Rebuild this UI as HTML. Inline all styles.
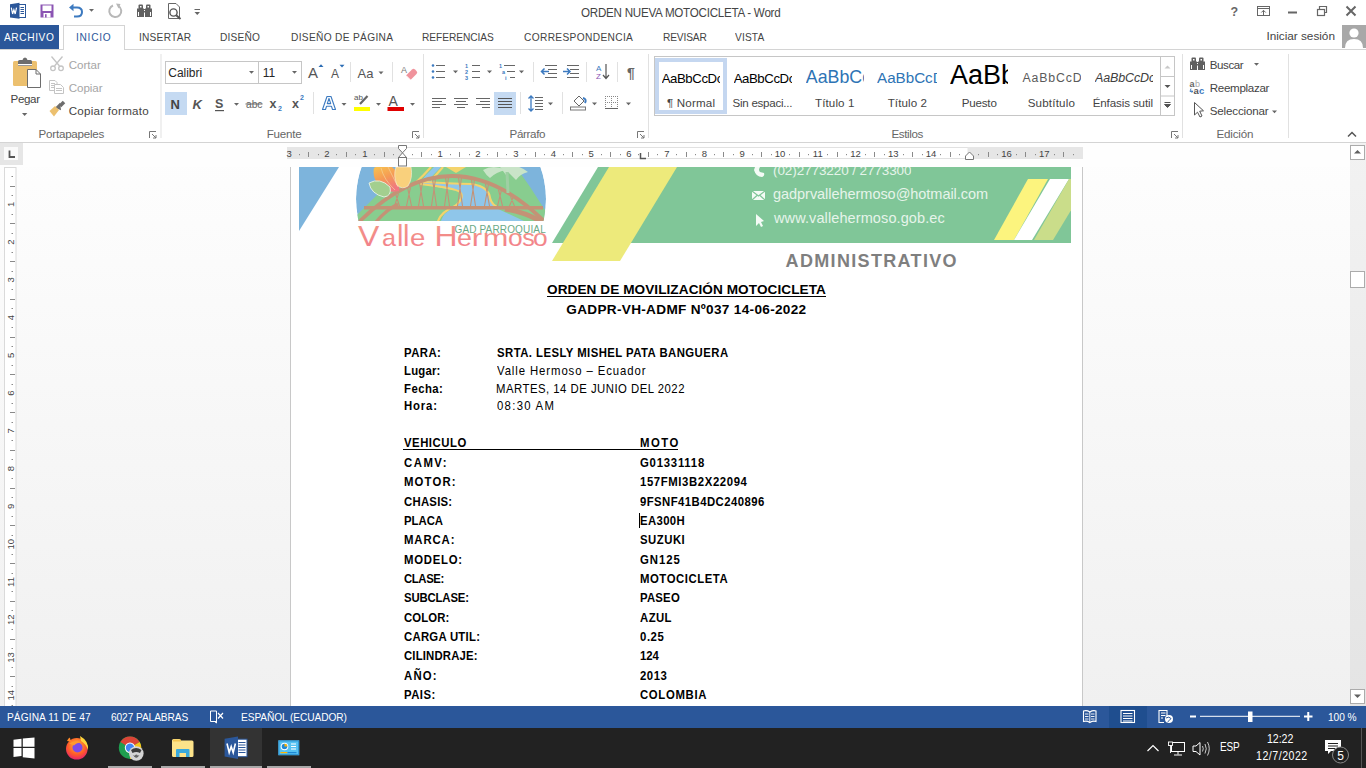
<!DOCTYPE html>
<html><head><meta charset="utf-8">
<style>
*{margin:0;padding:0;box-sizing:border-box}
html,body{width:1366px;height:768px;overflow:hidden;background:#fff;font-family:"Liberation Sans",sans-serif;color:#444}
.a{position:absolute}
.t{white-space:nowrap;line-height:1}
svg{position:absolute;overflow:visible}
</style></head><body>
<!-- doc area -->
<div class="a" style="left:0;top:143px;width:1350px;height:563px;background:linear-gradient(#fefefe,#f0f0f0)"></div>
<div class="a" style="left:290px;top:167px;width:793px;height:539px;background:#fff;border-left:1px solid #c8c8c8;border-right:1px solid #c8c8c8"></div>
<svg style="left:0;top:0" width="1366" height="300">
<defs>
<clipPath id="lc"><path d="M340 167 H560 V221 H340Z"/></clipPath><clipPath id="cc"><circle cx="451" cy="199" r="95"/></clipPath>
<clipPath id="bc"><path d="M552 167 H1071 V243 H552Z"/></clipPath>
<linearGradient id="fl" x1="0" y1="0" x2="0.4" y2="1"><stop offset="0" stop-color="#f8c64e"/><stop offset="0.55" stop-color="#f59a55"/><stop offset="1" stop-color="#f07880"/></linearGradient><linearGradient id="pk" x1="0" y1="0" x2="0" y2="1"><stop offset="0" stop-color="#f39a86"/><stop offset="1" stop-color="#f27d8c"/></linearGradient>
</defs>
<path d="M299 167 H339 L299 231Z" fill="#7db4dc"/>
<g clip-path="url(#lc)"><g clip-path="url(#cc)">
 <circle cx="451" cy="199" r="95" fill="#7db4dc"/>
 <path d="M350 221 L358 214 L377 195 L392 186 L408 167 L516 167 Q530 186 543 207 L552 221Z" fill="#88cd8f"/>
 <path d="M446 167 L466 167 L456 173Z" fill="#f4d36c"/>
 <path d="M434 167 L441 167 Q432 176 428 181 Q455 184 474 185 Q490 188 491 200 Q494 206 498 209 L524 221 L441 221 Q444 212 452 209 L455 206 Q464 196 458 191 Q440 188 420 183 Q426 174 434 167Z" fill="#8fc6ea"/>
 <g stroke="#f4d36c" stroke-width="2.2" fill="none">
  <path d="M431 167 Q424 175 417 181.5 Q450 183.5 472 184 Q489 187 490 198 Q492 206 500 208"/>
  <path d="M443 167 Q436 175 431 180"/>
  <path d="M420 184 Q455 188 460 192 Q465 198 455 206 Q441 212 438 221"/>
 </g>
 <g stroke="#c49276" stroke-width="1.1" fill="none"><path d="M394.5 206 L398.5 193.6 M399.5 206 L395.5 193.6 M406.5 206 L410.5 187.3 M411.5 206 L407.5 187.3 M418.5 206 L422.5 182.6 M423.5 206 L419.5 182.6 M431.5 206 L435.5 179.2 M436.5 206 L432.5 179.2 M444.5 206 L448.5 177.6 M449.5 206 L445.5 177.6 M457.5 206 L461.5 177.8 M462.5 206 L458.5 177.8 M470.5 206 L474.5 179.8 M475.5 206 L471.5 179.8 M484.5 206 L488.5 184.0 M489.5 206 L485.5 184.0 M497.5 206 L501.5 189.8 M502.5 206 L498.5 189.8 M509.5 206 L513.5 196.6 M514.5 206 L510.5 196.6"/></g>
 <path d="M359 222 Q452 130 545 222" stroke="#c49276" stroke-width="3.8" fill="none"/>
 <path d="M376 222 Q386 210 398 204" stroke="#c49276" stroke-width="3.2" fill="none"/>
 <path d="M505 209 Q525 212 542 222" stroke="#c49276" stroke-width="5" fill="none"/>
 <rect x="364" y="206" width="179" height="3.5" fill="#c49276"/>
 <path d="M374 168 Q380 164 392 167 Q401 173 399 191 Q388 194 379 186 Q372 177 374 168Z" fill="url(#fl)"/>
 <path d="M381 168 Q384 180 395 190 M388 167 Q393 177 398 187" stroke="#f3d29a" stroke-width="0.7" fill="none"/>
 <path d="M369 183 Q380 177 390 187 Q392 196 384 197 Q371 194 369 183Z" fill="#a3cf8f" stroke="#f2f8ee" stroke-width="0.8"/>
 <path d="M396 167 L411 167 Q413 178 408 186 Q402 190 397 185 Q393 176 396 167Z" fill="#f9d07c" stroke="#fbf1dc" stroke-width="0.6"/>
 <g fill="#c9e4c8"><path d="M483 170 Q493 164 506 170 Q496 172 490 178 Q486 175 483 170Z"/><path d="M504 168 Q515 162 528 172 Q520 174 516 180 Q510 174 504 168Z"/><path d="M500 167 L512 167 Q508 172 506 175Z"/></g>
 <path d="M507 172 L508 193" stroke="#9fcfa3" stroke-width="3"/>
</g></g>
<g fill="url(#pk)" font-family="Liberation Sans"><text transform="translate(358.0,245.5) scale(1.1,1)" font-size="29">V</text><text transform="translate(382.0,245.5) scale(1.05,1)" font-size="24">a</text><text transform="translate(397.0,245.5) scale(1.0,1)" font-size="29">l</text><text transform="translate(403.0,245.5) scale(1.0,1)" font-size="29">l</text><text transform="translate(409.9,245.5) scale(1.15,1)" font-size="24">e</text><text transform="translate(434.4,245.5) scale(1.1,1)" font-size="29">H</text><text transform="translate(456.9,245.5) scale(1.12,1)" font-size="24">e</text><text transform="translate(471.8,245.5) scale(1.3,1)" font-size="24">r</text><text transform="translate(482.8,245.5) scale(1.28,1)" font-size="24">m</text><text transform="translate(507.9,245.5) scale(1.1,1)" font-size="24">o</text><text transform="translate(522.2,245.5) scale(1.05,1)" font-size="24">s</text><text transform="translate(532.9,245.5) scale(1.1,1)" font-size="24">o</text></g>
<text x="454.5" y="232.6" font-family="Liberation Sans" font-size="10" textLength="91.2" lengthAdjust="spacing" fill="#6aa985">GAD PARROQUIAL</text>
<path d="M598 167 H1071 V243 H552Z" fill="#80c698"/>
<path d="M609 167 H677 L620 261 H552Z" fill="#edea7b"/>
<path d="M1028 179 H1048 L1014 240 H994Z" fill="#fcf47e"/>
<path d="M1050 179 H1069 L1032 240 H1014Z" fill="#ffffff"/>
<g clip-path="url(#bc)"><path d="M1069 179 H1090 L1053 240 H1034Z" fill="#cadd8a"/></g>
<g fill="#f4fbf6">
 <path d="M755 167 L760 167 Q758 170 760 172 L764 173 Q765 176 762 177 Q756 177 754 170Z"/>
 <path d="M752 191 H765 V200 H752Z"/>
 <path d="M756 214 L756 226 L759 223 L761 227 L763 226 L761 222 L764 221Z"/>
</g>
<path d="M752 191 L758.5 196 L765 191 M752 200 L757 195.5 M765 200 L760 195.5" stroke="#80c698" stroke-width="1.2" fill="none"/>
</svg>

<div class="a" style="left:403px;top:448.6px;width:275px;height:1px;background:#000"></div>
<div class="a" style="left:547px;top:296px;width:279px;height:1px;background:#000"></div>
<div class="a" style="left:639px;top:513px;width:1px;height:15px;background:#000"></div>
<!-- vertical scrollbar -->
<div class="a" style="left:1350px;top:143px;width:16px;height:563px;background:linear-gradient(#f2f2f2,#e4e4e4)"></div>
<div class="a" style="left:1350px;top:145px;width:15px;height:15px;background:#fff;border:1px solid #ababab"></div>
<svg style="left:1350px;top:145px" width="15" height="15"><path d="M4 8.5 L7.5 5 L11 8.5Z" fill="#606060"/></svg>
<div class="a" style="left:1350px;top:271px;width:15px;height:17px;background:#fff;border:1px solid #ababab"></div>
<div class="a" style="left:1350px;top:689px;width:15px;height:15px;background:#fff;border:1px solid #ababab"></div>
<svg style="left:1350px;top:689px" width="15" height="15"><path d="M4 5.5 L7.5 9 L11 5.5Z" fill="#606060"/></svg>
<!-- ruler row -->
<div class="a" style="left:0;top:143px;width:1350px;height:24px;background:#fefefe"></div>
<svg style="left:0;top:0" width="1366" height="706">
<rect x="287.5" y="147.5" width="795" height="11" fill="#fff" stroke="#e1e1e1"/>
<rect x="287" y="147" width="115.5" height="12" fill="#e6e6e6"/>
<rect x="967.5" y="147" width="115.5" height="12" fill="#e6e6e6"/>
<rect x="299" y="154" width="1" height="1.2" fill="#8a8a8a"/>
<rect x="308" y="152" width="1" height="5" fill="#8a8a8a"/>
<rect x="318" y="154" width="1" height="1.2" fill="#8a8a8a"/>
<rect x="336" y="154" width="1" height="1.2" fill="#8a8a8a"/>
<rect x="346" y="152" width="1" height="5" fill="#8a8a8a"/>
<rect x="355" y="154" width="1" height="1.2" fill="#8a8a8a"/>
<rect x="374" y="154" width="1" height="1.2" fill="#8a8a8a"/>
<rect x="384" y="152" width="1" height="5" fill="#8a8a8a"/>
<rect x="393" y="154" width="1" height="1.2" fill="#8a8a8a"/>
<rect x="412" y="154" width="1" height="1.2" fill="#8a8a8a"/>
<rect x="421" y="152" width="1" height="5" fill="#8a8a8a"/>
<rect x="431" y="154" width="1" height="1.2" fill="#8a8a8a"/>
<rect x="450" y="154" width="1" height="1.2" fill="#8a8a8a"/>
<rect x="459" y="152" width="1" height="5" fill="#8a8a8a"/>
<rect x="469" y="154" width="1" height="1.2" fill="#8a8a8a"/>
<rect x="487" y="154" width="1" height="1.2" fill="#8a8a8a"/>
<rect x="497" y="152" width="1" height="5" fill="#8a8a8a"/>
<rect x="506" y="154" width="1" height="1.2" fill="#8a8a8a"/>
<rect x="525" y="154" width="1" height="1.2" fill="#8a8a8a"/>
<rect x="535" y="152" width="1" height="5" fill="#8a8a8a"/>
<rect x="544" y="154" width="1" height="1.2" fill="#8a8a8a"/>
<rect x="563" y="154" width="1" height="1.2" fill="#8a8a8a"/>
<rect x="572" y="152" width="1" height="5" fill="#8a8a8a"/>
<rect x="582" y="154" width="1" height="1.2" fill="#8a8a8a"/>
<rect x="601" y="154" width="1" height="1.2" fill="#8a8a8a"/>
<rect x="610" y="152" width="1" height="5" fill="#8a8a8a"/>
<rect x="620" y="154" width="1" height="1.2" fill="#8a8a8a"/>
<rect x="638" y="154" width="1" height="1.2" fill="#8a8a8a"/>
<rect x="648" y="152" width="1" height="5" fill="#8a8a8a"/>
<rect x="657" y="154" width="1" height="1.2" fill="#8a8a8a"/>
<rect x="676" y="154" width="1" height="1.2" fill="#8a8a8a"/>
<rect x="686" y="152" width="1" height="5" fill="#8a8a8a"/>
<rect x="695" y="154" width="1" height="1.2" fill="#8a8a8a"/>
<rect x="714" y="154" width="1" height="1.2" fill="#8a8a8a"/>
<rect x="723" y="152" width="1" height="5" fill="#8a8a8a"/>
<rect x="733" y="154" width="1" height="1.2" fill="#8a8a8a"/>
<rect x="752" y="154" width="1" height="1.2" fill="#8a8a8a"/>
<rect x="761" y="152" width="1" height="5" fill="#8a8a8a"/>
<rect x="771" y="154" width="1" height="1.2" fill="#8a8a8a"/>
<rect x="789" y="154" width="1" height="1.2" fill="#8a8a8a"/>
<rect x="799" y="152" width="1" height="5" fill="#8a8a8a"/>
<rect x="808" y="154" width="1" height="1.2" fill="#8a8a8a"/>
<rect x="827" y="154" width="1" height="1.2" fill="#8a8a8a"/>
<rect x="837" y="152" width="1" height="5" fill="#8a8a8a"/>
<rect x="846" y="154" width="1" height="1.2" fill="#8a8a8a"/>
<rect x="865" y="154" width="1" height="1.2" fill="#8a8a8a"/>
<rect x="874" y="152" width="1" height="5" fill="#8a8a8a"/>
<rect x="884" y="154" width="1" height="1.2" fill="#8a8a8a"/>
<rect x="903" y="154" width="1" height="1.2" fill="#8a8a8a"/>
<rect x="912" y="152" width="1" height="5" fill="#8a8a8a"/>
<rect x="922" y="154" width="1" height="1.2" fill="#8a8a8a"/>
<rect x="940" y="154" width="1" height="1.2" fill="#8a8a8a"/>
<rect x="950" y="152" width="1" height="5" fill="#8a8a8a"/>
<rect x="959" y="154" width="1" height="1.2" fill="#8a8a8a"/>
<rect x="978" y="154" width="1" height="1.2" fill="#8a8a8a"/>
<rect x="988" y="152" width="1" height="5" fill="#8a8a8a"/>
<rect x="997" y="154" width="1" height="1.2" fill="#8a8a8a"/>
<rect x="1016" y="154" width="1" height="1.2" fill="#8a8a8a"/>
<rect x="1025" y="152" width="1" height="5" fill="#8a8a8a"/>
<rect x="1035" y="154" width="1" height="1.2" fill="#8a8a8a"/>
<rect x="1054" y="154" width="1" height="1.2" fill="#8a8a8a"/>
<rect x="1063" y="152" width="1" height="5" fill="#8a8a8a"/>
<rect x="1073" y="154" width="1" height="1.2" fill="#8a8a8a"/>
<text x="289.2" y="157" font-family="Liberation Sans" font-size="9.5" fill="#444" text-anchor="middle">3</text>
<text x="327.0" y="157" font-family="Liberation Sans" font-size="9.5" fill="#444" text-anchor="middle">2</text>
<text x="364.8" y="157" font-family="Liberation Sans" font-size="9.5" fill="#444" text-anchor="middle">1</text>
<text x="440.2" y="157" font-family="Liberation Sans" font-size="9.5" fill="#444" text-anchor="middle">1</text>
<text x="478.0" y="157" font-family="Liberation Sans" font-size="9.5" fill="#444" text-anchor="middle">2</text>
<text x="515.8" y="157" font-family="Liberation Sans" font-size="9.5" fill="#444" text-anchor="middle">3</text>
<text x="553.5" y="157" font-family="Liberation Sans" font-size="9.5" fill="#444" text-anchor="middle">4</text>
<text x="591.2" y="157" font-family="Liberation Sans" font-size="9.5" fill="#444" text-anchor="middle">5</text>
<text x="629.0" y="157" font-family="Liberation Sans" font-size="9.5" fill="#444" text-anchor="middle">6</text>
<text x="666.8" y="157" font-family="Liberation Sans" font-size="9.5" fill="#444" text-anchor="middle">7</text>
<text x="704.5" y="157" font-family="Liberation Sans" font-size="9.5" fill="#444" text-anchor="middle">8</text>
<text x="742.2" y="157" font-family="Liberation Sans" font-size="9.5" fill="#444" text-anchor="middle">9</text>
<text x="780.0" y="157" font-family="Liberation Sans" font-size="9.5" fill="#444" text-anchor="middle">10</text>
<text x="817.8" y="157" font-family="Liberation Sans" font-size="9.5" fill="#444" text-anchor="middle">11</text>
<text x="855.5" y="157" font-family="Liberation Sans" font-size="9.5" fill="#444" text-anchor="middle">12</text>
<text x="893.2" y="157" font-family="Liberation Sans" font-size="9.5" fill="#444" text-anchor="middle">13</text>
<text x="931.0" y="157" font-family="Liberation Sans" font-size="9.5" fill="#444" text-anchor="middle">14</text>
<text x="1006.5" y="157" font-family="Liberation Sans" font-size="9.5" fill="#444" text-anchor="middle">16</text>
<text x="1044.2" y="157" font-family="Liberation Sans" font-size="9.5" fill="#444" text-anchor="middle">17</text>
<path d="M398.5 145.5 H406.5 V148.5 L402.5 152.8 L398.5 148.5Z M402.5 152.8 L406.5 157.5 H398.5Z" fill="#fff" stroke="#777"/>
<rect x="398.5" y="157.5" width="8" height="8.5" fill="#fff" stroke="#777"/>
<path d="M965.5 159.5 V156 L969.5 152 L973.5 156 V159.5Z" fill="#fff" stroke="#777"/>
<path d="M640.5 153 V158.5 H646" stroke="#555" stroke-width="1.5" fill="none"/>
<rect x="0" y="143" width="23" height="22" fill="#e6e6e6"/>
<rect x="4" y="147" width="14" height="13" fill="#fafafa"/>
<path d="M9.5 150.5 V157 H15" stroke="#555" stroke-width="1.8" fill="none"/>
<rect x="4.5" y="167.5" width="11.5" height="540" fill="#fff" stroke="#dadada"/>
<rect x="11.5" y="176" width="1.5" height="1" fill="#8a8a8a"/>
<rect x="10" y="186" width="5" height="1" fill="#8a8a8a"/>
<rect x="11.5" y="195" width="1.5" height="1" fill="#8a8a8a"/>
<rect x="11.5" y="214" width="1.5" height="1" fill="#8a8a8a"/>
<rect x="10" y="223" width="5" height="1" fill="#8a8a8a"/>
<rect x="11.5" y="233" width="1.5" height="1" fill="#8a8a8a"/>
<rect x="11.5" y="252" width="1.5" height="1" fill="#8a8a8a"/>
<rect x="10" y="261" width="5" height="1" fill="#8a8a8a"/>
<rect x="11.5" y="271" width="1.5" height="1" fill="#8a8a8a"/>
<rect x="11.5" y="289" width="1.5" height="1" fill="#8a8a8a"/>
<rect x="10" y="299" width="5" height="1" fill="#8a8a8a"/>
<rect x="11.5" y="308" width="1.5" height="1" fill="#8a8a8a"/>
<rect x="11.5" y="327" width="1.5" height="1" fill="#8a8a8a"/>
<rect x="10" y="337" width="5" height="1" fill="#8a8a8a"/>
<rect x="11.5" y="346" width="1.5" height="1" fill="#8a8a8a"/>
<rect x="11.5" y="365" width="1.5" height="1" fill="#8a8a8a"/>
<rect x="10" y="374" width="5" height="1" fill="#8a8a8a"/>
<rect x="11.5" y="384" width="1.5" height="1" fill="#8a8a8a"/>
<rect x="11.5" y="403" width="1.5" height="1" fill="#8a8a8a"/>
<rect x="10" y="412" width="5" height="1" fill="#8a8a8a"/>
<rect x="11.5" y="422" width="1.5" height="1" fill="#8a8a8a"/>
<rect x="11.5" y="440" width="1.5" height="1" fill="#8a8a8a"/>
<rect x="10" y="450" width="5" height="1" fill="#8a8a8a"/>
<rect x="11.5" y="459" width="1.5" height="1" fill="#8a8a8a"/>
<rect x="11.5" y="478" width="1.5" height="1" fill="#8a8a8a"/>
<rect x="10" y="488" width="5" height="1" fill="#8a8a8a"/>
<rect x="11.5" y="497" width="1.5" height="1" fill="#8a8a8a"/>
<rect x="11.5" y="516" width="1.5" height="1" fill="#8a8a8a"/>
<rect x="10" y="525" width="5" height="1" fill="#8a8a8a"/>
<rect x="11.5" y="535" width="1.5" height="1" fill="#8a8a8a"/>
<rect x="11.5" y="554" width="1.5" height="1" fill="#8a8a8a"/>
<rect x="10" y="563" width="5" height="1" fill="#8a8a8a"/>
<rect x="11.5" y="573" width="1.5" height="1" fill="#8a8a8a"/>
<rect x="11.5" y="591" width="1.5" height="1" fill="#8a8a8a"/>
<rect x="10" y="601" width="5" height="1" fill="#8a8a8a"/>
<rect x="11.5" y="610" width="1.5" height="1" fill="#8a8a8a"/>
<rect x="11.5" y="629" width="1.5" height="1" fill="#8a8a8a"/>
<rect x="10" y="639" width="5" height="1" fill="#8a8a8a"/>
<rect x="11.5" y="648" width="1.5" height="1" fill="#8a8a8a"/>
<rect x="11.5" y="667" width="1.5" height="1" fill="#8a8a8a"/>
<rect x="10" y="676" width="5" height="1" fill="#8a8a8a"/>
<rect x="11.5" y="686" width="1.5" height="1" fill="#8a8a8a"/>
<rect x="11.5" y="705" width="1.5" height="1" fill="#8a8a8a"/>
<text x="0" y="0" font-family="Liberation Sans" font-size="9.5" fill="#444" text-anchor="middle" transform="translate(14,204.4) rotate(-90)">1</text>
<text x="0" y="0" font-family="Liberation Sans" font-size="9.5" fill="#444" text-anchor="middle" transform="translate(14,242.2) rotate(-90)">2</text>
<text x="0" y="0" font-family="Liberation Sans" font-size="9.5" fill="#444" text-anchor="middle" transform="translate(14,279.9) rotate(-90)">3</text>
<text x="0" y="0" font-family="Liberation Sans" font-size="9.5" fill="#444" text-anchor="middle" transform="translate(14,317.7) rotate(-90)">4</text>
<text x="0" y="0" font-family="Liberation Sans" font-size="9.5" fill="#444" text-anchor="middle" transform="translate(14,355.4) rotate(-90)">5</text>
<text x="0" y="0" font-family="Liberation Sans" font-size="9.5" fill="#444" text-anchor="middle" transform="translate(14,393.2) rotate(-90)">6</text>
<text x="0" y="0" font-family="Liberation Sans" font-size="9.5" fill="#444" text-anchor="middle" transform="translate(14,430.9) rotate(-90)">7</text>
<text x="0" y="0" font-family="Liberation Sans" font-size="9.5" fill="#444" text-anchor="middle" transform="translate(14,468.7) rotate(-90)">8</text>
<text x="0" y="0" font-family="Liberation Sans" font-size="9.5" fill="#444" text-anchor="middle" transform="translate(14,506.4) rotate(-90)">9</text>
<text x="0" y="0" font-family="Liberation Sans" font-size="9.5" fill="#444" text-anchor="middle" transform="translate(14,544.2) rotate(-90)">10</text>
<text x="0" y="0" font-family="Liberation Sans" font-size="9.5" fill="#444" text-anchor="middle" transform="translate(14,582.0) rotate(-90)">11</text>
<text x="0" y="0" font-family="Liberation Sans" font-size="9.5" fill="#444" text-anchor="middle" transform="translate(14,619.7) rotate(-90)">12</text>
<text x="0" y="0" font-family="Liberation Sans" font-size="9.5" fill="#444" text-anchor="middle" transform="translate(14,657.5) rotate(-90)">13</text>
<text x="0" y="0" font-family="Liberation Sans" font-size="9.5" fill="#444" text-anchor="middle" transform="translate(14,695.2) rotate(-90)">14</text>
</svg>
<!-- title + tabs + ribbon -->
<div class="a" style="left:0;top:0;width:1366px;height:49px;background:#fff"></div>
<div class="a" style="left:0;top:25px;width:59px;height:25px;background:#2b579a"></div>
<div class="a" style="left:63px;top:25px;width:62px;height:25px;background:#fff;border:1px solid #d4d4d4;border-bottom:none"></div>
<div class="a" style="left:0;top:49px;width:1366px;height:94px;background:#fff;border-top:1px solid #d4d4d4;border-bottom:1px solid #d4d4d4"></div>
<div class="a" style="left:64px;top:48px;width:60px;height:2px;background:#fff"></div>
<div class="a" style="left:1342px;top:25px;width:24px;height:23px;background:#a8a8a8"></div>
<svg style="left:0;top:0" width="1366" height="143" shape-rendering="geometricPrecision">
<!-- QAT -->
<path d="M10 4.2 L19.5 2.8 V18.8 L10 17.4Z" fill="#2b579a"/>
<rect x="19" y="4.5" width="6.5" height="13" fill="#fff" stroke="#2b579a" stroke-width="1"/>
<path d="M20.5 7.5H24 M20.5 9.5H24 M20.5 11.5H24 M20.5 13.5H24" stroke="#2b579a" stroke-width="1"/>
<path d="M11.3 7.6 L12.6 14 L13.9 9.8 L15.2 14 L16.5 7.6" stroke="#fff" stroke-width="1.2" fill="none"/>
<path d="M40.5 4.5 H53.5 V17.5 H40.5Z" fill="#8b54b3"/>
<rect x="42.5" y="5.5" width="9" height="5.5" fill="#fff"/>
<rect x="43.5" y="13" width="7" height="4.5" fill="#fff"/>
<rect x="45" y="14.2" width="1.6" height="3.3" fill="#8b54b3"/>
<path d="M71 7.5 H77 Q82 7.5 82 12 Q82 16.5 77 16.5 H74" stroke="#3c7ac0" stroke-width="2" fill="none"/>
<path d="M69 7.5 L73.5 3.8 V11.2Z" fill="#3c7ac0"/>
<path d="M89 9 H94 L91.5 11.7Z" fill="#666"/>
<path d="M113 5.5 A6 6 0 1 0 118.5 6" stroke="#b8b8b8" stroke-width="2" fill="none"/>
<path d="M116 3.5 L120.5 4 L118.5 8.5Z" fill="#b8b8b8"/>
<g transform="translate(137,4.5)"><g fill="#606060"><rect x="1.5" y="0" width="4.5" height="5" rx="1"/><rect x="9" y="0" width="4.5" height="5" rx="1"/><rect x="0" y="4" width="7" height="8.5"/><rect x="8" y="4" width="7" height="8.5"/><rect x="6" y="4.5" width="3" height="3.5"/></g>
<g fill="#fff"><rect x="3" y="1.5" width="1.5" height="1.5"/><rect x="10.5" y="1.5" width="1.5" height="1.5"/><rect x="1" y="7.5" width="1" height="4"/><rect x="13" y="7.5" width="1" height="4"/><rect x="7" y="5.5" width="1" height="1"/></g></g>
<path d="M168.5 3.5 H176 L179.5 7 V18.5 H168.5Z" fill="none" stroke="#666" stroke-width="1"/>
<circle cx="173.5" cy="12.5" r="3.6" fill="#fff" stroke="#555" stroke-width="1.4"/>
<path d="M176.2 15.2 L180.5 19" stroke="#555" stroke-width="2"/>
<rect x="194.5" y="9" width="5.5" height="1" fill="#666"/>
<path d="M194.5 12 H200 L197.25 15Z" fill="#666"/>
<!-- window controls -->
<text x="1230.5" y="16" font-family="Liberation Sans" font-weight="bold" font-size="12.5" fill="#666">?</text>
<rect x="1257.5" y="6.5" width="12" height="9" fill="none" stroke="#666" stroke-width="1"/>
<path d="M1257.5 8.5 H1269.5" stroke="#666"/><path d="M1263.5 15 V10.5 M1261.3 12.5 L1263.5 10.3 L1265.7 12.5" stroke="#666" fill="none"/>
<rect x="1288" y="11.5" width="9" height="2" fill="#666"/>
<rect x="1317.5" y="9.5" width="7" height="6" fill="none" stroke="#666" stroke-width="1.2"/>
<path d="M1319.5 9 V6.5 H1326.5 V12.5 H1325" stroke="#666" fill="none" stroke-width="1.2"/>
<path d="M1346.5 6.5 L1355.5 15.5 M1355.5 6.5 L1346.5 15.5" stroke="#666" stroke-width="2"/>
<!-- avatar -->
<circle cx="1354" cy="33" r="4.6" fill="#fff"/>
<path d="M1345 48 Q1345 39 1354 39 Q1363 39 1363 48Z" fill="#fff"/>
<!-- separators -->
<g fill="#e1e1e1"><rect x="160.5" y="54" width="1" height="84"/><rect x="423" y="54" width="1" height="84"/><rect x="648" y="54" width="1" height="84"/><rect x="1182" y="54" width="1" height="84"/><rect x="1288" y="54" width="1" height="84"/></g>
<!-- launchers -->
<g stroke="#777" fill="none" stroke-width="1">
 <path d="M149.5 138 V131.5 H156"/><path d="M152 134 L156 138 M156 135 V138 H153"/>
 <path d="M412.5 138 V131.5 H419"/><path d="M415 134 L419 138 M419 135 V138 H416"/>
 <path d="M637.5 138 V131.5 H644"/><path d="M640 134 L644 138 M644 135 V138 H641"/>
 <path d="M1171.5 138 V131.5 H1178"/><path d="M1174 134 L1178 138 M1178 135 V138 H1175"/>
</g>
<path d="M1348 136.5 L1352 132.5 L1356 136.5" stroke="#555" stroke-width="1.5" fill="none"/>
<!-- Portapapeles -->
<rect x="13" y="61" width="24" height="25" rx="1.5" fill="#ecc06f"/>
<path d="M18 66 V61.5 Q18 60 19.5 60 H22.5 Q23 57.5 25 57.5 Q27 57.5 27.5 60 H30.5 Q32 60 32 61.5 V66Z" fill="#6d6d6d"/>
<rect x="18" y="64" width="14" height="1.3" fill="#fff"/>
<path d="M27.5 69.5 H36 L40.5 74 V87.5 H27.5Z" fill="#fff" stroke="#6d6d6d" stroke-width="1"/>
<path d="M36 69.5 V74 H40.5" fill="none" stroke="#6d6d6d" stroke-width="1"/>
<path d="M22 113 H27.3 L24.65 116Z" fill="#666"/>
<g stroke="#c4c4c4" fill="none" stroke-width="1.3">
 <path d="M51.5 56.5 L59.5 66 M62.5 56.5 L54.5 66"/>
 <circle cx="53" cy="68.3" r="2.3"/><circle cx="61" cy="68.3" r="2.3"/>
</g>
<g stroke="#c4c4c4" fill="#fff" stroke-width="1">
 <path d="M49.5 80.5 H55 L57 82.5 V90.5 H49.5Z"/>
 <path d="M54.5 84.5 H60.5 L63.5 87.5 V93.5 H54.5Z"/>
 <path d="M51 83.5H55 M51 85.5H54 M51 87.5H54 M56 88.5H62 M56 90.5H62"/>
</g>
<path d="M56 104 L63 104 L58.5 110 Z" fill="#6d6d6d" transform="rotate(-45 60 107)"/>
<path d="M60 106 L64 102" stroke="#6d6d6d" stroke-width="3.5"/>
<path d="M49.5 111 L55 106 L59 110 L54 116.5Z" fill="#ecc06f"/>
<!-- Fuente -->
<rect x="165.5" y="61.5" width="136" height="22" fill="#fff" stroke="#c6c6c6"/>
<path d="M258.5 61.5 V83.5" stroke="#c6c6c6"/>
<g fill="#666"><path d="M249 71 H254 L251.5 73.8Z"/><path d="M292 71 H297 L294.5 73.8Z"/>
<path d="M378.5 71.5 H383.5 L381 74.3Z"/><path d="M234 103 H239 L236.5 105.8Z"/><path d="M341.5 103 H346.5 L344 105.8Z"/><path d="M376 103 H381 L378.5 105.8Z"/><path d="M410 103 H415 L412.5 105.8Z"/></g>
<text x="308" y="78" font-family="Liberation Sans" font-size="15" fill="#555">A</text>
<path d="M318.5 67 L321 64.2 L323.5 67Z" fill="#2b6cb4"/>
<text x="331" y="78" font-family="Liberation Sans" font-size="12" fill="#555">A</text>
<path d="M339.5 64.8 L344.5 64.8 L342 67.6Z" fill="#2b6cb4"/>
<rect x="350" y="62" width="1" height="20" fill="#e1e1e1"/>
<rect x="392" y="62" width="1" height="20" fill="#e1e1e1"/>
<text x="357.5" y="77.5" font-family="Liberation Sans" font-size="13" fill="#555">Aa</text>
<text x="401" y="73" font-family="Liberation Sans" font-size="9" fill="#777">A</text>
<path d="M406 75.5 L412 69.5 Q413.5 68 415 69.5 L416.5 71 Q418 72.5 416.5 74 L410.5 80 Z" fill="#f0939c"/>
<path d="M406 75.5 L410.5 80" stroke="#fff" stroke-width="1"/>
<rect x="165" y="92" width="22" height="23" fill="#c5daf2"/>
<text x="170.5" y="108.5" font-family="Liberation Sans" font-weight="bold" font-size="13" fill="#444">N</text>
<text x="192.5" y="108.5" font-family="Liberation Sans" font-weight="bold" font-style="italic" font-size="13" fill="#555">K</text>
<text x="215" y="108" font-family="Liberation Sans" font-weight="bold" font-size="12.5" fill="#555">S</text>
<rect x="215" y="110" width="9" height="1.2" fill="#555"/>
<text x="246" y="108" font-family="Liberation Sans" font-size="11" fill="#666" textLength="16.5" lengthAdjust="spacingAndGlyphs">abc</text>
<rect x="245.5" y="103.5" width="17" height="1" fill="#666"/>
<text x="269.5" y="108" font-family="Liberation Sans" font-weight="bold" font-size="12.5" fill="#555">x</text>
<text x="278" y="111" font-family="Liberation Sans" font-weight="bold" font-size="7" fill="#3c7ac0">2</text>
<text x="292" y="108" font-family="Liberation Sans" font-weight="bold" font-size="12.5" fill="#555">x</text>
<text x="300" y="100" font-family="Liberation Sans" font-weight="bold" font-size="7" fill="#3c7ac0">2</text>
<rect x="313" y="92" width="1" height="22" fill="#e1e1e1"/>
<path d="M322.5 109.5 L327 96.5 H331 L335.5 109.5 H332.5 L331.5 106.3 H326.5 L325.5 109.5Z M327.3 103.6 H330.7 L329 98.3Z" fill="#fff" fill-rule="evenodd" stroke="#3c7ac0" stroke-width="1.1" stroke-linejoin="round"/>
<text x="354" y="100" font-family="Liberation Sans" font-size="8" fill="#555">ab</text>
<path d="M360 104 L367.5 96" stroke="#666" stroke-width="2.2"/>
<rect x="354" y="107" width="16" height="4" fill="#ffff00"/>
<text x="388.5" y="106" font-family="Liberation Sans" font-size="14" fill="#555">A</text>
<rect x="387.5" y="107" width="16.5" height="4" fill="#e00000"/>
<!-- Parrafo row1 -->
<g fill="#3c7ac0"><circle cx="433" cy="65.5" r="1.3"/><circle cx="433" cy="71.5" r="1.3"/><circle cx="433" cy="77.5" r="1.3"/></g>
<g stroke="#666" stroke-width="1"><path d="M436 65.5H445 M436 71.5H445 M436 77.5H445"/>
<path d="M472 65.5H480 M472 71.5H480 M472 77.5H480"/>
<path d="M504 65.5H515 M507 71.5H515 M510 77.5H515"/></g>
<text x="465" y="68" font-family="Liberation Sans" font-weight="bold" font-size="5.5" fill="#3c7ac0">1</text>
<text x="465" y="74" font-family="Liberation Sans" font-weight="bold" font-size="5.5" fill="#3c7ac0">2</text>
<text x="465" y="80" font-family="Liberation Sans" font-weight="bold" font-size="5.5" fill="#3c7ac0">3</text>
<text x="499" y="68" font-family="Liberation Sans" font-weight="bold" font-size="5.5" fill="#3c7ac0">1</text>
<text x="502" y="74" font-family="Liberation Sans" font-weight="bold" font-size="5.5" fill="#3c7ac0">a</text>
<text x="505" y="80" font-family="Liberation Sans" font-weight="bold" font-size="5.5" fill="#3c7ac0">i</text>
<g fill="#666"><path d="M453 70.5 H458 L455.5 73.3Z"/><path d="M487 70.5 H492 L489.5 73.3Z"/><path d="M519 70.5 H524 L521.5 73.3Z"/></g>
<g fill="#e1e1e1"><rect x="533" y="62" width="1" height="20"/><rect x="586" y="62" width="1" height="20"/><rect x="617" y="62" width="1" height="20"/><rect x="520" y="92" width="1" height="22"/><rect x="562" y="92" width="1" height="22"/></g>
<g stroke="#666" stroke-width="1"><path d="M545 65.5H557 M548 69.5H557 M548 73.5H557 M545 77.5H557"/><path d="M567 65.5H579 M570 69.5H579 M570 73.5H579 M567 77.5H579"/></g>
<path d="M549 71.5 H541.5 M544.5 68.5 L541.5 71.5 L544.5 74.5" stroke="#3c7ac0" stroke-width="1.5" fill="none"/>
<path d="M563 71.5 H570 M567 68.5 L570 71.5 L567 74.5" stroke="#3c7ac0" stroke-width="1.5" fill="none"/>
<text x="596" y="70.5" font-family="Liberation Sans" font-size="8" fill="#3c7ac0">A</text>
<text x="596" y="79" font-family="Liberation Sans" font-size="8" fill="#8b54b3">Z</text>
<path d="M606 64 V78 M603 75 L606 78.5 L609 75" stroke="#555" stroke-width="1.2" fill="none"/>
<text x="627" y="78" font-family="Liberation Sans" font-weight="bold" font-size="14" fill="#666">¶</text>
<!-- Parrafo row2 -->
<g stroke="#666" stroke-width="1">
 <path d="M432 98.5H446 M432 101.5H442 M432 104.5H446 M432 107.5H440"/>
 <path d="M454 98.5H468 M456 101.5H466 M454 104.5H468 M457 107.5H465"/>
 <path d="M476 98.5H490 M480 101.5H490 M476 104.5H490 M482 107.5H490"/>
</g>
<rect x="494" y="92" width="22" height="23" fill="#c5daf2"/>
<g stroke="#555" stroke-width="1"><path d="M498 98.5H512 M498 101.5H512 M498 104.5H512 M498 107.5H512"/></g>
<path d="M531 96 V111 M528.5 98.5 L531 96 L533.5 98.5 M528.5 108.5 L531 111 L533.5 108.5" stroke="#3c7ac0" stroke-width="1.3" fill="none"/>
<g stroke="#666" stroke-width="1"><path d="M535 97.5H543 M535 100.5H543 M535 103.5H543 M535 106.5H543 M535 109.5H543"/></g>
<path d="M548 102.5 H553 L550.5 105.3Z" fill="#666"/>
<path d="M574 101 L579 96 L584 101 L579 106Z" fill="#fff" stroke="#666"/>
<path d="M583 98 Q587 99 585 103" stroke="#3c7ac0" stroke-width="2" fill="none"/>
<rect x="570.5" y="107" width="15" height="3" fill="#fff" stroke="#777"/>
<path d="M592 102.5 H597 L594.5 105.3Z" fill="#666"/>
<g stroke="#888" stroke-width="1" stroke-dasharray="1 1"><path d="M605 96.5H618 M605 102.5H618 M605.5 96V108 M611.5 96V108 M617.5 96V108"/></g>
<path d="M605 108.5H618" stroke="#666"/>
<path d="M626 102.5 H631 L628.5 105.3Z" fill="#666"/>
<!-- Estilos gallery -->
<rect x="654.5" y="56.5" width="520" height="59" fill="none" stroke="#c6c6c6"/>
<rect x="657" y="60" width="68" height="52" fill="none" stroke="#c5d7f0" stroke-width="4"/>
<path d="M1160.5 57 V115 M1161 76.5H1174 M1161 96H1174" stroke="#c6c6c6"/>
<path d="M1164.5 68.5 L1167.5 65.5 L1170.5 68.5Z" fill="#c8c8c8"/>
<path d="M1164.5 85 H1170.5 L1167.5 88Z" fill="#555"/>
<path d="M1164.5 102.5 H1170.5 M1164.5 104.5 H1170.5 L1167.5 107.5Z" stroke="#555" stroke-width="1" fill="#555"/>
<!-- Edicion -->
<g transform="translate(1190,57.5)"><g fill="#606060"><rect x="1.5" y="0" width="4.5" height="5" rx="1"/><rect x="9" y="0" width="4.5" height="5" rx="1"/><rect x="0" y="4" width="7" height="8.5"/><rect x="8" y="4" width="7" height="8.5"/><rect x="6" y="4.5" width="3" height="3.5"/></g>
<g fill="#fff"><rect x="3" y="1.5" width="1.5" height="1.5"/><rect x="10.5" y="1.5" width="1.5" height="1.5"/><rect x="1" y="7.5" width="1" height="4"/><rect x="13" y="7.5" width="1" height="4"/><rect x="7" y="5.5" width="1" height="1"/></g></g>
<path d="M1254 63 H1259 L1256.5 65.8Z" fill="#666"/>
<text x="1189.5" y="87" font-family="Liberation Sans" font-weight="bold" font-size="9" fill="#666">a</text><text x="1195" y="87" font-family="Liberation Sans" font-size="9" fill="#aaa">b</text>
<text x="1193.5" y="94" font-family="Liberation Sans" font-weight="bold" font-size="9.5" fill="#555">a</text><text x="1199" y="94" font-family="Liberation Sans" font-weight="bold" font-size="9.5" fill="#3c7ac0">c</text>
<path d="M1191 88.5 L1190 91.5 H1193 M1191.5 90.5 L1193 91.5 L1191.5 92.5" stroke="#3c7ac0" stroke-width="0.9" fill="none"/>
<path d="M1194.5 102.5 L1194.5 115 L1197.5 112.2 L1200 117 L1202 116 L1199.7 111.2 L1203.5 110.8Z" fill="#fff" stroke="#555" stroke-width="1"/>
<path d="M1272 110.5 H1277 L1274.5 113.3Z" fill="#666"/>
</svg>

<!-- status bar -->
<div class="a" style="left:0;top:706px;width:1366px;height:22px;background:#2b579a"></div>
<div class="a" style="left:1109px;top:706px;width:38px;height:22px;background:#1f4e8f"></div>
<svg style="left:0;top:700px" width="1366" height="68">
<g transform="translate(0,-700)">
<!-- proofing -->
<path d="M210.5 711 H216.5 V723 M210.5 711 V721.5 H216.5" stroke="#fff" fill="none" stroke-width="1"/>
<path d="M216.5 711 V723 L214.5 721.5" stroke="#fff" fill="none" stroke-width="1"/>
<path d="M218 713 L223 718.5 M223 713 L218 718.5" stroke="#fff" stroke-width="1.2"/>
<!-- read mode -->
<path d="M1083.5 711 Q1087 710 1089.8 712 Q1093 710 1096 711 V721.5 Q1093 720.5 1089.8 722.5 Q1087 720.5 1083.5 721.5Z" fill="none" stroke="#fff" stroke-width="1.1"/>
<path d="M1089.8 712 V722.5 M1085 714H1088.5 M1085 716.5H1088.5 M1085 719H1088.5 M1091 714H1094.5 M1091 716.5H1094.5 M1091 719H1094.5" stroke="#fff" stroke-width="0.9"/>
<!-- print layout -->
<rect x="1121" y="710.5" width="13.5" height="12" fill="none" stroke="#fff" stroke-width="1.1"/>
<path d="M1123 713.5H1132.5 M1123 716H1132.5 M1123 718.5H1132.5 M1123 721H1132.5" stroke="#fff" stroke-width="1"/>
<!-- web layout -->
<path d="M1167 719 V710.5 H1159 V722.5 H1164" fill="none" stroke="#fff" stroke-width="1.1"/>
<path d="M1161 713H1165.5 M1161 715.5H1165.5 M1161 718H1163" stroke="#fff" stroke-width="1"/>
<circle cx="1169" cy="719" r="4" fill="#fff"/>
<path d="M1166 718 Q1169 716 1171 718.5 Q1169 721 1167.5 722" stroke="#2b579a" stroke-width="1" fill="none"/>
<!-- zoom -->
<rect x="1190" y="715.5" width="6" height="2" fill="#fff"/>
<rect x="1200" y="715.8" width="100" height="1" fill="#fff"/>
<rect x="1248" y="711.5" width="4.5" height="10.5" fill="#fff"/>
<rect x="1304" y="715.5" width="8.5" height="2" fill="#fff"/>
<rect x="1307.25" y="712" width="2" height="9" fill="#fff"/>
</g>
</svg>

<!-- taskbar -->
<div class="a" style="left:0;top:728px;width:1366px;height:40px;background:#222"></div>
<div class="a" style="left:210px;top:728px;width:52px;height:40px;background:#333"></div>
<svg style="left:0;top:728px" width="1366" height="40">
<defs>
<radialGradient id="ff" cx="0.5" cy="0.35" r="0.7"><stop offset="0" stop-color="#ffbd2e"/><stop offset="0.6" stop-color="#ff5a2a"/><stop offset="1" stop-color="#e3187a"/></radialGradient>
</defs>
<g transform="translate(0,-728)">
<!-- windows -->
<path d="M13.5 739.8 L21.5 738.8 V746.8 H13.5Z M22.8 738.6 L34.5 737.4 V746.8 H22.8Z M13.5 748 H21.5 V756 L13.5 757Z M22.8 748 H34.5 V758.6 L22.8 757.2Z" fill="#fff"/>
<!-- firefox -->
<circle cx="76.8" cy="748.8" r="10.8" fill="url(#ff)"/>
<path d="M80 736 Q89 741 88 750 Q86 744 81 741Z" fill="#ffd43b"/>
<path d="M67 741 Q68 738 70 737.5 Q70 741 73 742Z" fill="#ff8a2a"/>
<circle cx="77.5" cy="747.5" r="5" fill="#7e4ae8"/>
<path d="M69 743.5 Q75 739.5 81.5 742.5 Q76.5 742.5 74 745.5Z" fill="#ff9a2e"/>
<!-- chrome -->
<circle cx="130" cy="747.7" r="11.2" fill="#1e9e50"/>
<path d="M130 747.7 L120.3 742.1 A11.2 11.2 0 0 1 139.7 742.1Z" fill="#db4437"/>
<path d="M130 747.7 L139.7 742.1 A11.2 11.2 0 0 1 130 758.9Z" fill="#f7c31b"/>
<circle cx="130" cy="747.7" r="5.2" fill="#fff"/>
<circle cx="130" cy="747.7" r="4.2" fill="#4285f4"/>
<circle cx="136.3" cy="753.5" r="7.3" fill="#d4d4d4"/>
<path d="M131 750 Q136 746 141.5 750 L140 753 Q136.3 751 132.5 753Z" fill="#3a3a3a"/>
<path d="M133 755 Q136.3 760 139.5 755 Q136.3 757 133 755Z" fill="#555"/>
<circle cx="136.3" cy="756" r="1.5" fill="#666"/>
<!-- explorer -->
<path d="M172 740.5 Q172 739 173.5 739 H179.5 L181 740.5 H192 Q193.5 740.5 193.5 742 V755.5 Q193.5 757 192 757 H173.5 Q172 757 172 755.5Z" fill="#fde38a"/>
<rect x="173" y="739.5" width="8" height="2" fill="#f4c550"/>
<path d="M176 757 V750 Q176 749 177 749 H188.5 Q189.5 749 189.5 750 V757 H186 V753 H179.5 V757Z" fill="#3aa9dd"/>
<!-- word -->
<path d="M224.6 738.8 L238 736.4 V759 L224.6 756.6Z" fill="#2b579a"/>
<rect x="237.5" y="739.2" width="9.5" height="17.5" fill="#fff"/>
<rect x="237.5" y="739.2" width="9.5" height="17.5" fill="none" stroke="#2b579a" stroke-width="1"/>
<path d="M238.5 742.5H245.5 M238.5 745H245.5 M238.5 747.5H245.5 M238.5 750H245.5 M238.5 752.5H245.5" stroke="#2b579a" stroke-width="1"/>
<path d="M227 743.5 L229.2 752.5 L231.2 746.5 L233.2 752.5 L235.4 743.5" stroke="#fff" stroke-width="1.6" fill="none"/>
<!-- control panel -->
<rect x="278.3" y="740.3" width="21" height="15" fill="#56c2f2"/>
<rect x="279" y="741" width="19.6" height="13.6" fill="none" stroke="#2a8ed0" stroke-width="0.8"/>
<circle cx="284.5" cy="746.5" r="3.8" fill="#fff"/><circle cx="284.5" cy="746.5" r="2.8" fill="#1e88d5"/>
<path d="M284.5 746.5 V743.7 A2.8 2.8 0 0 1 287.3 746.5Z" fill="#ffb300"/>
<path d="M291 744H296 M291 746.5H296 M291 749H296" stroke="#fff" stroke-width="1.2"/>
<rect x="280.5" y="752" width="7" height="1.2" fill="#ffb300"/><rect x="287.5" y="752" width="9" height="1.2" fill="#1e88d5"/>
<!-- indicators -->
<g fill="#a9a9a9"><rect x="108" y="766" width="44" height="2"/><rect x="161" y="766" width="44" height="2"/><rect x="210" y="766" width="52" height="2"/><rect x="267" y="766" width="44" height="2"/></g>
<!-- tray -->
<path d="M1147.5 751 L1153 745.5 L1158.5 751" stroke="#fff" stroke-width="1.2" fill="none"/>
<rect x="1171.5" y="742.5" width="13" height="9" fill="none" stroke="#fff" stroke-width="1"/>
<path d="M1178 751.5 V754.5 M1174 755 H1182" stroke="#fff" stroke-width="1"/>
<rect x="1168.5" y="742" width="4" height="3.5" fill="#222" stroke="#fff" stroke-width="0.9"/>
<path d="M1170.5 745.5 V753" stroke="#fff" stroke-width="0.9"/>
<path d="M1193 746 H1196 L1200 742.5 V755 L1196 751.5 H1193Z" fill="none" stroke="#fff" stroke-width="1"/>
<path d="M1202.5 746 Q1204 748.7 1202.5 751.5 M1205 744 Q1207.5 748.7 1205 753.5 M1207.5 742 Q1211 748.7 1207.5 755.5" stroke="#fff" stroke-width="0.9" fill="none" opacity="0.85"/>
<path d="M1325 740 H1341 V751 H1331 L1328 754 V751 H1325Z" fill="#fff"/>
<path d="M1328 743.5H1338 M1328 746H1338 M1328 748.5H1335" stroke="#222" stroke-width="1"/>
<circle cx="1340.5" cy="755" r="8" fill="#222" stroke="#888" stroke-width="1"/>
<text x="1340.5" y="759.5" font-family="Liberation Sans" font-size="12" fill="#fff" text-anchor="middle">5</text>
<rect x="1361" y="728" width="1" height="40" fill="#555"/>
</g>
</svg>

<div class="a t" style="left:581.40px;top:7.22px;font-size:12.5px;color:#444;letter-spacing:-0.277px;transform:scaleX(0.93);transform-origin:0 0">ORDEN NUEVA MOTOCICLETA - Word</div>
<div class="a t" style="left:4.00px;top:32.23px;font-size:11.3px;color:#fff;letter-spacing:0.645px;transform:scaleX(0.9);transform-origin:0 0">ARCHIVO</div>
<div class="a t" style="left:75.60px;top:32.23px;font-size:11.3px;color:#2b579a;letter-spacing:0.809px;transform:scaleX(0.9);transform-origin:0 0">INICIO</div>
<div class="a t" style="left:139.10px;top:32.23px;font-size:11.3px;color:#444;letter-spacing:0.250px;transform:scaleX(0.9);transform-origin:0 0">INSERTAR</div>
<div class="a t" style="left:220.20px;top:32.23px;font-size:11.3px;color:#444;letter-spacing:0.228px;transform:scaleX(0.9);transform-origin:0 0">DISEÑO</div>
<div class="a t" style="left:290.50px;top:32.23px;font-size:11.3px;color:#444;letter-spacing:0.356px;transform:scaleX(0.9);transform-origin:0 0">DISEÑO DE PÁGINA</div>
<div class="a t" style="left:422.30px;top:32.23px;font-size:11.3px;color:#444;letter-spacing:-0.059px;transform:scaleX(0.9);transform-origin:0 0">REFERENCIAS</div>
<div class="a t" style="left:523.70px;top:32.23px;font-size:11.3px;color:#444;letter-spacing:0.392px;transform:scaleX(0.9);transform-origin:0 0">CORRESPONDENCIA</div>
<div class="a t" style="left:662.60px;top:32.23px;font-size:11.3px;color:#444;letter-spacing:-0.165px;transform:scaleX(0.9);transform-origin:0 0">REVISAR</div>
<div class="a t" style="left:735.20px;top:32.23px;font-size:11.3px;color:#444;letter-spacing:0.155px;transform:scaleX(0.9);transform-origin:0 0">VISTA</div>
<div class="a t" style="left:1266.40px;top:30.71px;font-size:11.8px;color:#444;letter-spacing:-0.022px">Iniciar sesión</div>
<div class="a t" style="left:10.50px;top:92.68px;font-size:11.6px;color:#444;letter-spacing:-0.344px">Pegar</div>
<div class="a t" style="left:68.70px;top:58.98px;font-size:11.6px;color:#a6a6a6;letter-spacing:-0.030px">Cortar</div>
<div class="a t" style="left:68.70px;top:81.78px;font-size:11.6px;color:#a6a6a6;letter-spacing:-0.058px">Copiar</div>
<div class="a t" style="left:68.70px;top:104.98px;font-size:11.6px;color:#444;letter-spacing:0.259px">Copiar formato</div>
<div class="a t" style="left:38.60px;top:127.58px;font-size:11.6px;color:#666;letter-spacing:-0.230px">Portapapeles</div>
<div class="a t" style="left:168.30px;top:66.54px;font-size:12px;color:#262626;letter-spacing:-0.024px">Calibri</div>
<div class="a t" style="left:262.80px;top:66.54px;font-size:12px;color:#262626">11</div>
<div class="a t" style="left:266.70px;top:127.58px;font-size:11.6px;color:#666;letter-spacing:-0.209px">Fuente</div>
<div class="a t" style="left:509.60px;top:127.98px;font-size:11.6px;color:#666;letter-spacing:-0.362px">Párrafo</div>
<div class="a t" style="left:891.40px;top:127.88px;font-size:11.6px;color:#666;letter-spacing:-0.375px">Estilos</div>
<div class="a t" style="left:1216.40px;top:127.88px;font-size:11.6px;color:#666;letter-spacing:-0.163px">Edición</div>
<div class="a t" style="left:1209.70px;top:59.48px;font-size:11.6px;color:#444;letter-spacing:-0.424px">Buscar</div>
<div class="a t" style="left:1209.70px;top:82.08px;font-size:11.6px;color:#444;letter-spacing:-0.305px">Reemplazar</div>
<div class="a t" style="left:1209.70px;top:104.88px;font-size:11.6px;color:#444;letter-spacing:-0.162px">Seleccionar</div>
<div class="a t" style="left:667.00px;top:96.98px;font-size:11.6px;color:#444;letter-spacing:0.166px">¶ Normal</div>
<div class="a t" style="left:732.50px;top:96.98px;font-size:11.6px;color:#444;letter-spacing:-0.269px">Sin espaci...</div>
<div class="a t" style="left:815.00px;top:96.98px;font-size:11.6px;color:#444;letter-spacing:0.112px">Título 1</div>
<div class="a t" style="left:887.70px;top:97.08px;font-size:11.6px;color:#444;letter-spacing:0.098px">Título 2</div>
<div class="a t" style="left:961.70px;top:97.08px;font-size:11.6px;color:#444;letter-spacing:-0.189px">Puesto</div>
<div class="a t" style="left:1027.70px;top:97.08px;font-size:11.6px;color:#444;letter-spacing:0.186px">Subtítulo</div>
<div class="a t" style="left:1092.70px;top:97.08px;font-size:11.6px;color:#444;letter-spacing:-0.124px">Énfasis sutil</div>
<div class="a t" style="left:661.70px;top:72.43px;font-size:13.2px;color:#000;letter-spacing:-0.414px;width:58.80px;overflow:hidden;height:17.2px;line-height:13.2px">AaBbCcDc</div>
<div class="a t" style="left:733.70px;top:72.43px;font-size:13.2px;color:#000;letter-spacing:-0.414px;width:58.80px;overflow:hidden;height:17.2px;line-height:13.2px">AaBbCcDc</div>
<div class="a t" style="left:805.80px;top:69.43px;font-size:17.8px;color:#2e74b5;width:58.20px;overflow:hidden;height:23.1px;line-height:17.8px">AaBbCcDc</div>
<div class="a t" style="left:877.00px;top:69.93px;font-size:15.2px;color:#2e74b5;width:59.50px;overflow:hidden;height:19.8px;line-height:15.2px">AaBbCcDc</div>
<div class="a t" style="left:950.00px;top:62.14px;font-size:27px;color:#000;width:58.00px;overflow:hidden;height:35.1px;line-height:27px">AaBbC</div>
<div class="a t" style="left:1022.40px;top:72.39px;font-size:12.3px;color:#5a5a5a;letter-spacing:0.858px;width:58.60px;overflow:hidden;height:16.0px;line-height:12.3px">AaBbCcDc</div>
<div class="a t" style="left:1095.00px;top:72.22px;font-size:12.5px;color:#404040;font-style:italic;letter-spacing:-0.126px;width:57.50px;overflow:hidden;height:16.2px;line-height:12.5px">AaBbCcDc</div>
<div class="a t" style="left:547.00px;top:282.79px;font-size:13.6px;color:#000;font-weight:bold;letter-spacing:0.068px">ORDEN DE MOVILIZACIÓN MOTOCICLETA</div>
<div class="a t" style="left:566.30px;top:303.19px;font-size:13.6px;color:#000;font-weight:bold;letter-spacing:0.311px">GADPR-VH-ADMF Nº037 14-06-2022</div>
<div class="a t" style="left:785.60px;top:251.76px;font-size:18px;color:#7f7f7f;font-weight:bold;letter-spacing:1.334px">ADMINISTRATIVO</div>
<div class="a t" style="left:773.00px;top:164.07px;font-size:13.5px;color:#e6f4ea;letter-spacing:-0.093px;clip-path:inset(2.9px 0 0 0)">(02)2773220 / 2773300</div>
<div class="a t" style="left:773.00px;top:187.23px;font-size:14.5px;color:#e6f4ea;letter-spacing:-0.040px">gadprvallehermoso@hotmail.com</div>
<div class="a t" style="left:774.00px;top:211.33px;font-size:14.5px;color:#e6f4ea;letter-spacing:0.105px">www.vallehermoso.gob.ec</div>
<div class="a t" style="left:404.00px;top:346.03px;font-size:13.2px;color:#000;font-weight:bold;letter-spacing:0.514px;transform:scaleX(0.86);transform-origin:0 0">PARA:</div>
<div class="a t" style="left:497.30px;top:346.03px;font-size:13.2px;color:#000;font-weight:bold;letter-spacing:0.521px;transform:scaleX(0.86);transform-origin:0 0">SRTA. LESLY MISHEL PATA BANGUERA</div>
<div class="a t" style="left:404.00px;top:364.23px;font-size:13.2px;color:#000;font-weight:bold;letter-spacing:0.246px;transform:scaleX(0.86);transform-origin:0 0">Lugar:</div>
<div class="a t" style="left:404.00px;top:381.83px;font-size:13.2px;color:#000;font-weight:bold;letter-spacing:0.531px;transform:scaleX(0.86);transform-origin:0 0">Fecha:</div>
<div class="a t" style="left:404.00px;top:399.03px;font-size:13.2px;color:#000;font-weight:bold;letter-spacing:0.994px;transform:scaleX(0.86);transform-origin:0 0">Hora:</div>
<div class="a t" style="left:497.30px;top:364.23px;font-size:13.2px;color:#000;letter-spacing:1.062px;transform:scaleX(0.86);transform-origin:0 0">Valle Hermoso – Ecuador</div>
<div class="a t" style="left:496.44px;top:381.83px;font-size:13.2px;color:#000;letter-spacing:0.569px;transform:scaleX(0.86);transform-origin:0 0">MARTES, 14 DE JUNIO DEL 2022</div>
<div class="a t" style="left:497.30px;top:399.03px;font-size:13.2px;color:#000;letter-spacing:1.496px;transform:scaleX(0.86);transform-origin:0 0">08:30 AM</div>
<div class="a t" style="left:403.50px;top:435.73px;font-size:13.2px;color:#000;font-weight:bold;letter-spacing:0.602px;transform:scaleX(0.86);transform-origin:0 0">VEHICULO</div>
<div class="a t" style="left:639.50px;top:435.73px;font-size:13.2px;color:#000;font-weight:bold;letter-spacing:1.709px;transform:scaleX(0.86);transform-origin:0 0">MOTO</div>
<div class="a t" style="left:403.50px;top:456.03px;font-size:13.2px;color:#000;font-weight:bold;letter-spacing:1.742px;transform:scaleX(0.86);transform-origin:0 0">CAMV:</div>
<div class="a t" style="left:639.50px;top:456.03px;font-size:13.2px;color:#000;font-weight:bold;letter-spacing:0.895px;transform:scaleX(0.86);transform-origin:0 0">G01331118</div>
<div class="a t" style="left:403.50px;top:475.36px;font-size:13.2px;color:#000;font-weight:bold;letter-spacing:1.339px;transform:scaleX(0.86);transform-origin:0 0">MOTOR:</div>
<div class="a t" style="left:639.50px;top:475.36px;font-size:13.2px;color:#000;font-weight:bold;letter-spacing:0.712px;transform:scaleX(0.86);transform-origin:0 0">157FMI3B2X22094</div>
<div class="a t" style="left:403.50px;top:494.69px;font-size:13.2px;color:#000;font-weight:bold;letter-spacing:0.292px;transform:scaleX(0.86);transform-origin:0 0">CHASIS:</div>
<div class="a t" style="left:639.50px;top:494.69px;font-size:13.2px;color:#000;font-weight:bold;letter-spacing:0.511px;transform:scaleX(0.86);transform-origin:0 0">9FSNF41B4DC240896</div>
<div class="a t" style="left:403.50px;top:514.02px;font-size:13.2px;color:#000;font-weight:bold;letter-spacing:-0.021px;transform:scaleX(0.86);transform-origin:0 0">PLACA</div>
<div class="a t" style="left:639.50px;top:514.02px;font-size:13.2px;color:#000;font-weight:bold;letter-spacing:0.415px;transform:scaleX(0.86);transform-origin:0 0">EA300H</div>
<div class="a t" style="left:403.50px;top:533.35px;font-size:13.2px;color:#000;font-weight:bold;letter-spacing:1.035px;transform:scaleX(0.86);transform-origin:0 0">MARCA:</div>
<div class="a t" style="left:639.50px;top:533.35px;font-size:13.2px;color:#000;font-weight:bold;letter-spacing:0.595px;transform:scaleX(0.86);transform-origin:0 0">SUZUKI</div>
<div class="a t" style="left:403.50px;top:552.68px;font-size:13.2px;color:#000;font-weight:bold;letter-spacing:0.870px;transform:scaleX(0.86);transform-origin:0 0">MODELO:</div>
<div class="a t" style="left:639.50px;top:552.68px;font-size:13.2px;color:#000;font-weight:bold;letter-spacing:1.120px;transform:scaleX(0.86);transform-origin:0 0">GN125</div>
<div class="a t" style="left:403.50px;top:572.01px;font-size:13.2px;color:#000;font-weight:bold;letter-spacing:-0.437px;transform:scaleX(0.86);transform-origin:0 0">CLASE:</div>
<div class="a t" style="left:639.50px;top:572.01px;font-size:13.2px;color:#000;font-weight:bold;letter-spacing:0.637px;transform:scaleX(0.86);transform-origin:0 0">MOTOCICLETA</div>
<div class="a t" style="left:403.50px;top:591.34px;font-size:13.2px;color:#000;font-weight:bold;letter-spacing:-0.163px;transform:scaleX(0.86);transform-origin:0 0">SUBCLASE:</div>
<div class="a t" style="left:639.50px;top:591.34px;font-size:13.2px;color:#000;font-weight:bold;letter-spacing:0.250px;transform:scaleX(0.86);transform-origin:0 0">PASEO</div>
<div class="a t" style="left:403.50px;top:610.67px;font-size:13.2px;color:#000;font-weight:bold;letter-spacing:0.142px;transform:scaleX(0.86);transform-origin:0 0">COLOR:</div>
<div class="a t" style="left:639.50px;top:610.67px;font-size:13.2px;color:#000;font-weight:bold;letter-spacing:0.508px;transform:scaleX(0.86);transform-origin:0 0">AZUL</div>
<div class="a t" style="left:403.50px;top:630.00px;font-size:13.2px;color:#000;font-weight:bold;letter-spacing:0.306px;transform:scaleX(0.86);transform-origin:0 0">CARGA UTIL:</div>
<div class="a t" style="left:639.50px;top:630.00px;font-size:13.2px;color:#000;font-weight:bold;letter-spacing:0.664px;transform:scaleX(0.86);transform-origin:0 0">0.25</div>
<div class="a t" style="left:403.50px;top:649.33px;font-size:13.2px;color:#000;font-weight:bold;letter-spacing:0.198px;transform:scaleX(0.86);transform-origin:0 0">CILINDRAJE:</div>
<div class="a t" style="left:639.50px;top:649.33px;font-size:13.2px;color:#000;font-weight:bold;transform:scaleX(0.86);transform-origin:0 0">124</div>
<div class="a t" style="left:403.50px;top:668.66px;font-size:13.2px;color:#000;font-weight:bold;letter-spacing:1.418px;transform:scaleX(0.86);transform-origin:0 0">AÑO:</div>
<div class="a t" style="left:639.50px;top:668.66px;font-size:13.2px;color:#000;font-weight:bold;letter-spacing:0.604px;transform:scaleX(0.86);transform-origin:0 0">2013</div>
<div class="a t" style="left:403.50px;top:687.99px;font-size:13.2px;color:#000;font-weight:bold;letter-spacing:0.533px;transform:scaleX(0.86);transform-origin:0 0">PAIS:</div>
<div class="a t" style="left:639.50px;top:687.99px;font-size:13.2px;color:#000;font-weight:bold;letter-spacing:0.772px;transform:scaleX(0.86);transform-origin:0 0">COLOMBIA</div>
<div class="a t" style="left:7.40px;top:711.81px;font-size:11.8px;color:#fff;letter-spacing:0.115px;transform:scaleX(0.86);transform-origin:0 0">PÁGINA 11 DE 47</div>
<div class="a t" style="left:111.30px;top:711.81px;font-size:11.8px;color:#fff;letter-spacing:-0.099px;transform:scaleX(0.86);transform-origin:0 0">6027 PALABRAS</div>
<div class="a t" style="left:240.60px;top:711.81px;font-size:11.8px;color:#fff;letter-spacing:-0.090px;transform:scaleX(0.86);transform-origin:0 0">ESPAÑOL (ECUADOR)</div>
<div class="a t" style="left:1328.00px;top:711.81px;font-size:11.8px;color:#fff;letter-spacing:-0.060px;transform:scaleX(0.86);transform-origin:0 0">100 %</div>
<div class="a t" style="left:1220.40px;top:741.32px;font-size:12.5px;color:#fff;letter-spacing:-0.275px;transform:scaleX(0.8);transform-origin:0 0">ESP</div>
<div class="a t" style="left:1267.30px;top:732.72px;font-size:12.5px;color:#fff;letter-spacing:-0.067px;transform:scaleX(0.85);transform-origin:0 0">12:22</div>
<div class="a t" style="left:1255.70px;top:749.92px;font-size:12.5px;color:#fff;letter-spacing:0.587px;transform:scaleX(0.85);transform-origin:0 0">12/7/2022</div>
</body></html>
